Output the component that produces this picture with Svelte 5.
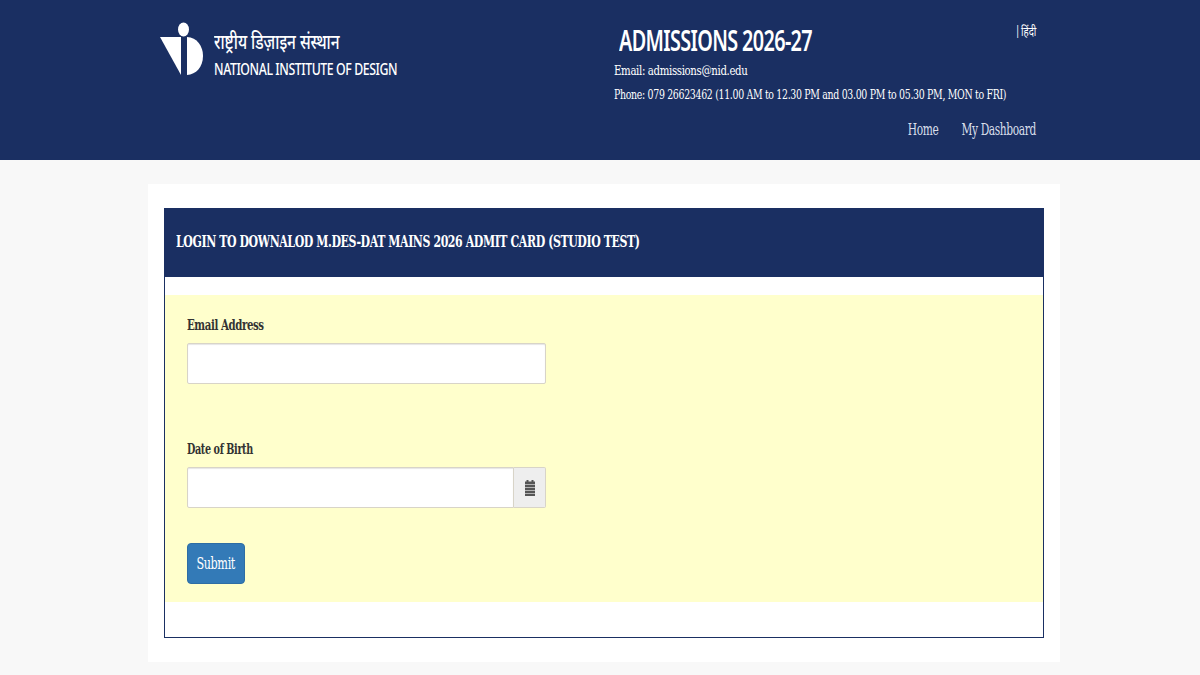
<script>
  const heading = 'LOGIN TO DOWNALOD M.DES-DAT MAINS 2026 ADMIT CARD (STUDIO TEST)';
</script>

<header class="site-header">
  <div class="brand">
    <svg class="logo" width="44" height="56" viewBox="0 0 44 56" aria-hidden="true">
      <ellipse cx="23.500" cy="7.500" rx="5.500" ry="7" fill="#fff" />
      <path d="M0 15 L21 15 L21 53 Z" fill="#fff" />
      <path d="M27 15 C37 15.500 43 24 43 34 C43 45 36 52.500 27 53 Z" fill="#fff" />
    </svg>
    <div class="brand-text">
      <div class="brand-hi">राष्ट्रीय डिज़ाइन संस्थान</div>
      <div class="brand-en">NATIONAL INSTITUTE OF DESIGN</div>
    </div>
  </div>

  <div class="info">
    <div class="info-top">
      <div class="contact">
        <h1>ADMISSIONS 2026-27</h1>
        <p class="email">Email: admissions@nid.edu</p>
        <p class="phone">Phone: 079 26623462 (11.00 AM to 12.30 PM and 03.00 PM to 05.30 PM, MON to FRI)</p>
      </div>
      <div class="lang">|&#8202;हिंदी</div>
    </div>
    <nav>
      <span>Home</span>
      <span>My Dashboard</span>
    </nav>
  </div>
</header>

<main class="sheet">
  <section class="panel">
    <h2><span>{heading}</span></h2>
    <div class="panel-body">
      <form class="form" onsubmit={(e) => e.preventDefault()}>
        <div class="field first">
          <label for="email">Email Address</label>
          <input id="email" type="text" />
        </div>
        <div class="field second">
          <label class="narrow" for="dob">Date of Birth</label>
          <div class="group">
            <input id="dob" type="text" />
            <span class="addon">
              <svg width="12" height="18" viewBox="0 0 12 18" aria-hidden="true">
                <path d="M2.500 1h2v2h-2zM7.500 1h2v2h-2z" fill="#555" />
                <path d="M1 2.500h10v14.500H1z" fill="#555" />
                <path d="M1 5.500h10M1 8.500h10M1 11.500h10M1 14.500h10" stroke="#ccc" stroke-width="0.800" />
              </svg>
            </span>
          </div>
        </div>
        <button type="submit"><span>Submit</span></button>
      </form>
    </div>
  </section>
</main>

<style>
  :global(body) {
    margin: 0;
    background: #f8f8f8;
    font-family: "DejaVu Serif Condensed", "DejaVu Serif", serif;
  }
  .site-header {
    box-sizing: border-box;
    height: 160px;
    background: #1a2f62;
    color: #fff;
    display: flex;
    padding: 22px 164px 0 160px;
  }
  .brand {
    display: flex;
    align-items: flex-start;
    gap: 10px;
    width: 454px;
    flex: none;
  }
  .brand-text {
    padding-top: 10px;
    font-family: "Noto Sans", "Open Sans", sans-serif;
    transform: scaleX(0.770);
    transform-origin: left;
    white-space: nowrap;
  }
  .brand-hi {
    font-family: "Noto Sans Devanagari", "Noto Sans", "Lohit Devanagari", sans-serif;
    font-size: 20px;
    line-height: 25px;
    font-weight: 500;
  }
  .brand-en {
    font-size: 16px;
    line-height: 24px;
    font-weight: 500;
    letter-spacing: -0.550px;
  }
  .info { flex: 1; min-width: 0; }
  .info-top { display: flex; justify-content: space-between; }
  .contact { flex: 1; min-width: 0; }
  h1 {
    margin: 0 0 0 5px;
    font-family: "Noto Sans", "Open Sans", sans-serif;
    font-size: 28px;
    line-height: 37px;
    font-weight: 600;
    letter-spacing: -0.900px;
    white-space: nowrap;
    transform: scaleX(0.708);
    transform-origin: left;
  }
  .contact p {
    margin: 0;
    font-size: 13px;
    letter-spacing: -0.400px;
    white-space: nowrap;
    transform-origin: left;
  }
  .contact .email { line-height: 20px; padding-top: 2px; transform: scaleX(0.870); }
  .contact .phone { line-height: 20px; margin-top: 4px; transform: scaleX(0.804); }
  .lang {
    font-family: "Noto Sans Devanagari", "Noto Sans", sans-serif;
    font-size: 13px;
    line-height: 20px;
    padding-top: 1px;
    white-space: nowrap;
    flex: none;
    transform: scaleX(0.750);
    transform-origin: right;
  }
  nav {
    display: flex;
    justify-content: flex-end;
    gap: 31px;
    margin-top: 14px;
    font-size: 16px;
    line-height: 22px;
    letter-spacing: -0.500px;
    color: #d9dfea;
    transform: scaleX(0.740);
    transform-origin: right;
  }
  .sheet {
    box-sizing: border-box;
    width: 912px;
    height: 478px;
    margin: 24px auto 0 148px;
    padding: 24px 16px;
    background: #fff;
  }
  .panel {
    box-sizing: border-box;
    height: 430px;
    border: 1px solid #1a2f62;
  }
  h2 {
    box-sizing: border-box;
    height: 69px;
    margin: -1px -1px 0;
    padding: 0 12px;
    background: #1a2f62;
    color: #fff;
    font-size: 16px;
    line-height: 67px;
    font-weight: 700;
    letter-spacing: -0.550px;
    white-space: nowrap;
    overflow: hidden;
  }
  h2 span {
    display: inline-block;
    transform: scaleX(0.763);
    transform-origin: left;
  }
  .panel-body {
    padding-top: 18px;
  }
  .form {
    box-sizing: border-box;
    height: 307px;
    padding: 19px 22px 0;
    background: #ffffcc;
  }
  .field { width: 359px; }
  label {
    display: block;
    font-size: 15.500px;
    line-height: 22px;
    font-weight: 700;
    letter-spacing: -0.550px;
    color: #333;
    margin-bottom: 7px;
    transform: scaleX(0.730);
    transform-origin: left;
    white-space: nowrap;
  }
  label.narrow { transform: scaleX(0.690); }
  .second { margin-top: 54px; }
  input {
    box-sizing: border-box;
    display: block;
    width: 100%;
    height: 41px;
    padding: 6px 12px;
    border: 1px solid #d8d4c8;
    background: #fff;
    box-shadow: inset 0 1px 1px rgba(0, 0, 0, 0.1);
    border-radius: 2px;
    outline: none;
  }
  .group { display: flex; }
  .group input { flex: 1; min-width: 0; border-radius: 2px 0 0 2px; }
  .addon {
    box-sizing: border-box;
    width: 32px;
    flex: none;
    display: flex;
    align-items: center;
    justify-content: center;
    background: #eee;
    border: 1px solid #d8d4c8;
    border-left: 0;
    border-radius: 0 2px 2px 0;
  }
  button {
    display: block;
    box-sizing: border-box;
    width: 58px;
    height: 41px;
    margin-top: 35px;
    padding: 0;
    font: inherit;
    font-size: 16px;
    letter-spacing: -0.500px;
    color: #fff;
    background: #337ab7;
    border: 1px solid #2e6da4;
    border-radius: 4px;
  }
  button span { display: inline-block; transform: scaleX(0.780); }
</style>
